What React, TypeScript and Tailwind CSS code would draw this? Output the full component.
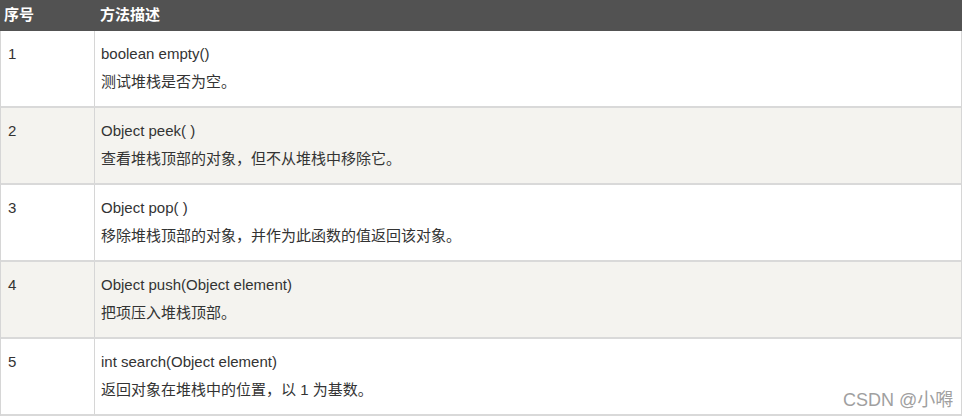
import React from "react";

const rows = [
  { n: "1", sig: "boolean empty()", desc: "测试堆栈是否为空。" },
  { n: "2", sig: "Object peek( )", desc: "查看堆栈顶部的对象，但不从堆栈中移除它。" },
  { n: "3", sig: "Object pop( )", desc: "移除堆栈顶部的对象，并作为此函数的值返回该对象。" },
  { n: "4", sig: "Object push(Object element)", desc: "把项压入堆栈顶部。" },
  { n: "5", sig: "int search(Object element)", desc: "返回对象在堆栈中的位置，以 1 为基数。" },
];

export default function App() {
  return (
    <div
      className="relative w-[970px] h-[418px] bg-white"
      style={{ fontFamily: '"Liberation Sans", Arial, "Noto Sans CJK SC", sans-serif' }}
    >
      <div className="w-[962px]">
        <div className="grid grid-cols-[95px_1fr] h-[31px] bg-[#525252] text-white text-[15px] font-bold items-center">
          <div className="pl-[4px]">序号</div>
          <div className="pl-[5px]">方法描述</div>
        </div>
        <div className="border-l border-r border-[#d6d6d6]">
          {rows.map((r, i) => (
            <div
              key={r.n}
              className={`grid grid-cols-[94px_1fr] h-[77px] border-b-2 border-[#d9d9d9] text-[15px] text-[#333] ${
                i % 2 === 1 ? "bg-[#f4f3ef]" : "bg-white"
              }`}
            >
              <div className="pl-[7px] pt-[13px] leading-[20px] border-r border-[#d6d6d6]">{r.n}</div>
              <div className="pl-[6px] pt-[13px] leading-[20px] flex flex-col gap-[8px]">
                <div>{r.sig}</div>
                <div>{r.desc}</div>
              </div>
            </div>
          ))}
        </div>
      </div>
      <div className="absolute left-[843px] top-[389px] text-[18px] text-[#a0a0a0] leading-[22px]">
        CSDN @小嘚
      </div>
    </div>
  );
}
